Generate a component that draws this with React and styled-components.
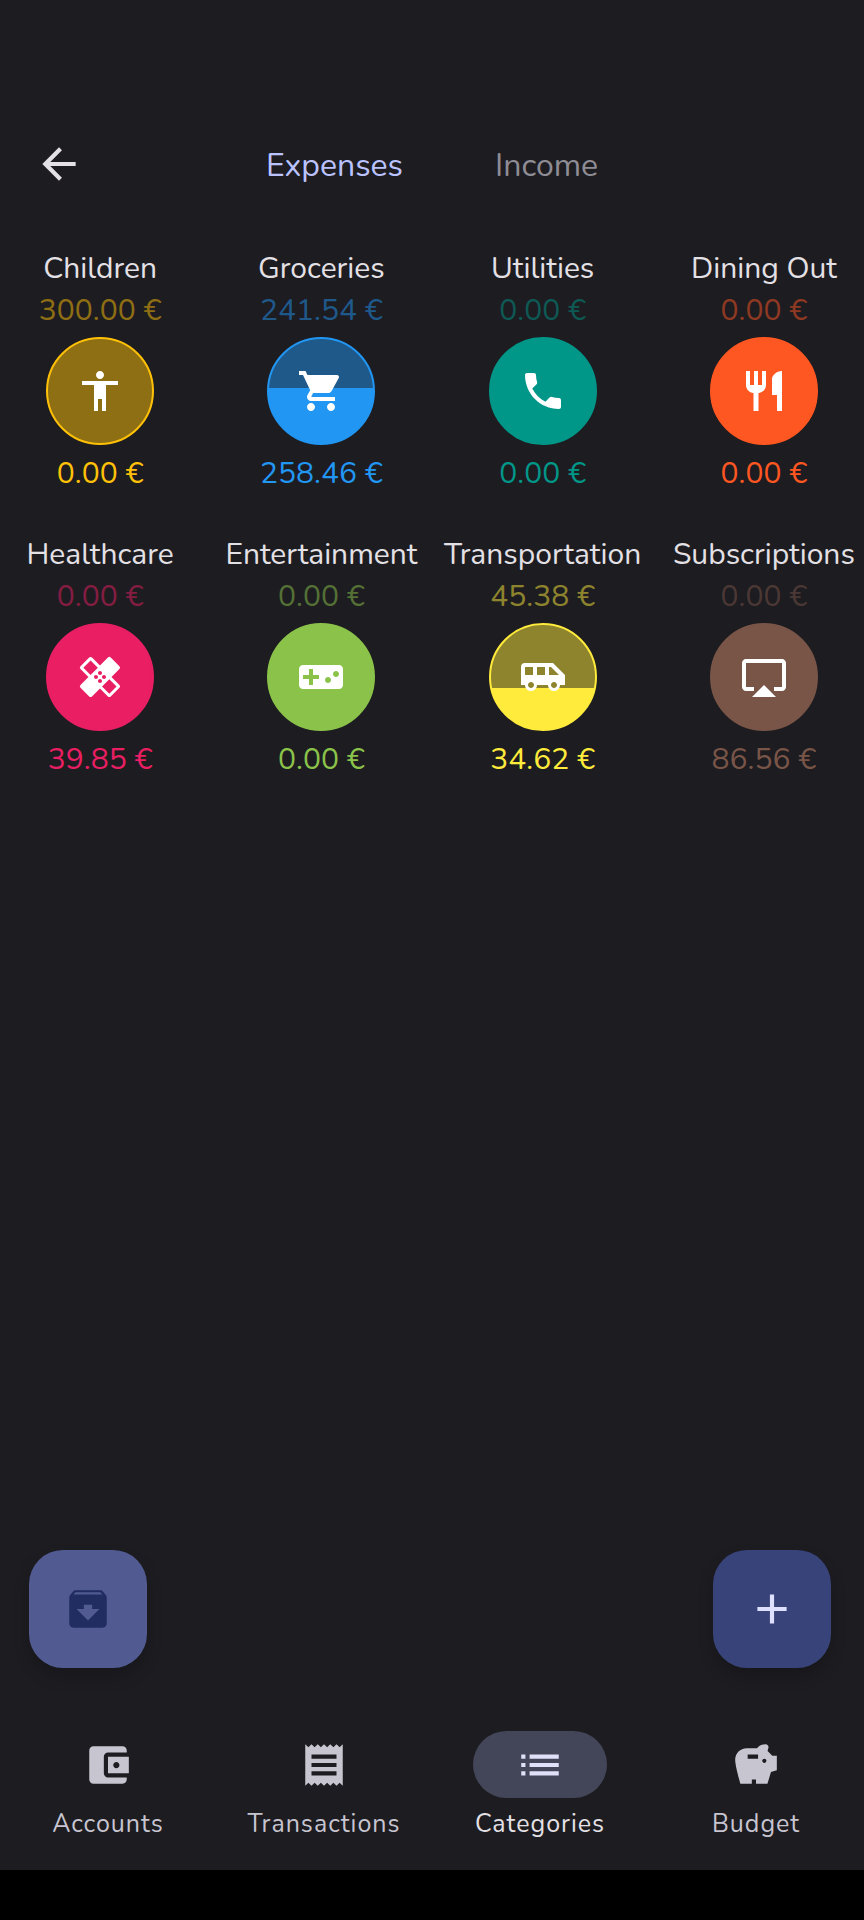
import React from "react";
import styled, { createGlobalStyle } from "styled-components";
import {
  MdAccessibility,
  MdAccountBalanceWallet,
  MdAdd,
  MdAirplay,
  MdAirportShuttle,
  MdArchive,
  MdArrowBack,
  MdHealing,
  MdList,
  MdPhone,
  MdReceipt,
  MdRestaurant,
  MdSavings,
  MdShoppingCart,
  MdVideogameAsset,
} from "react-icons/md";

const GlobalStyle = createGlobalStyle`
  *, *::before, *::after { box-sizing: border-box; }
  body {
    margin: 0;
    background: #000;
    color: #e4e1e6;
    font-family: Nunito, "Noto Sans", "Open Sans", sans-serif;
  }
  button {
    margin: 0;
    padding: 0;
    border: 0;
    background: none;
    color: inherit;
    font: inherit;
    cursor: pointer;
  }
  svg { display: block; }
`;

const Screen = styled.div`
  display: flex;
  flex-direction: column;
  min-height: 100vh;
  padding-bottom: 50px;
`;

const Content = styled.div`
  flex: 1;
  display: flex;
  flex-direction: column;
  padding-top: 114px;
  background: #1d1c21;
`;

const Header = styled.header`
  display: grid;
  grid-template-columns: 1fr auto 1fr;
  align-items: center;
  height: 100px;
  padding: 0 34px;
`;

const IconButton = styled.button`
  justify-self: start;
`;

const Tabs = styled.div`
  display: flex;
  gap: 92px;
`;

const Tab = styled.button`
  padding-top: 4px;
  font-size: 32px;
  line-height: 44px;
  color: ${(p) => (p.$active ? "#bac3ff" : "#8e8c94")};
`;

const CategoryGrid = styled.main`
  display: grid;
  grid-template-columns: repeat(4, minmax(0, 1fr));
  gap: 39px 21px;
  padding-top: 34px;
`;

const Category = styled.button`
  display: flex;
  flex-direction: column;
  align-items: center;
  font-size: 30px;
  line-height: 42px;
  white-space: nowrap;
  color: ${(p) => p.$color};
`;

const CategoryName = styled.span`
  color: #e4e1e6;
`;

const Remaining = styled.span`
  opacity: 0.5;
`;

const Disc = styled.span`
  display: grid;
  place-items: center;
  width: 108px;
  height: 108px;
  margin: 5px 0 8px;
  border: 2px solid ${(p) => p.$color};
  border-radius: 50%;
  background: linear-gradient(
      to top,
      ${(p) => p.$color} ${(p) => p.$level}%,
      ${(p) => p.$color}80 ${(p) => p.$level}%
    )
    border-box;
  color: #fff;
`;

const Actions = styled.div`
  display: flex;
  justify-content: space-between;
  margin-top: auto;
  padding: 40px 33px 63px 29px;
`;

const Fab = styled.button`
  display: grid;
  place-items: center;
  width: 118px;
  height: 118px;
  border-radius: 34px;
  background: ${(p) => (p.$primary ? "#384379" : "#515b92")};
  color: ${(p) => (p.$primary ? "#dee0ff" : "#212c61")};
  box-shadow: 0 8px 16px rgba(0, 0, 0, 0.2);
`;

const NavBar = styled.nav`
  display: grid;
  grid-template-columns: repeat(4, minmax(0, 1fr));
  padding-bottom: 28px;
`;

const NavItem = styled.button`
  display: flex;
  flex-direction: column;
  align-items: center;
  gap: 8px;
  font-size: 25px;
  line-height: 36px;
  letter-spacing: 1px;
  color: ${(p) => (p.$active ? "#e4e1e6" : "#c7c5d0")};
`;

const NavPill = styled.span`
  display: grid;
  place-items: center;
  width: 134px;
  height: 67px;
  border-radius: 34px;
  background: ${(p) => (p.$active ? "#434659" : "transparent")};
  color: ${(p) => (p.$active ? "#e0e1f9" : "#c7c5d0")};
`;

const categories = [
  { name: "Children", top: "300.00 €", bottom: "0.00 €", color: "#ffc107", level: 0, icon: MdAccessibility },
  { name: "Groceries", top: "241.54 €", bottom: "258.46 €", color: "#2196f3", level: 53, icon: MdShoppingCart },
  { name: "Utilities", top: "0.00 €", bottom: "0.00 €", color: "#009688", level: 100, icon: MdPhone },
  { name: "Dining Out", top: "0.00 €", bottom: "0.00 €", color: "#ff5722", level: 100, icon: MdRestaurant },
  { name: "Healthcare", top: "0.00 €", bottom: "39.85 €", color: "#e91e63", level: 100, icon: MdHealing },
  { name: "Entertainment", top: "0.00 €", bottom: "0.00 €", color: "#8bc34a", level: 100, icon: MdVideogameAsset },
  { name: "Transportation", top: "45.38 €", bottom: "34.62 €", color: "#ffeb3b", level: 40, icon: MdAirportShuttle },
  { name: "Subscriptions", top: "0.00 €", bottom: "86.56 €", color: "#795548", level: 100, icon: MdAirplay },
];

const navItems = [
  { label: "Accounts", icon: MdAccountBalanceWallet },
  { label: "Transactions", icon: MdReceipt },
  { label: "Categories", icon: MdList, active: true },
  { label: "Budget", icon: MdSavings },
];

export default function App() {
  return (
    <>
      <GlobalStyle />
      <Screen>
        <Content>
          <Header>
            <IconButton type="button" aria-label="Back">
              <MdArrowBack size={50} />
            </IconButton>
            <Tabs role="tablist">
              <Tab type="button" role="tab" aria-selected="true" $active>
                Expenses
              </Tab>
              <Tab type="button" role="tab" aria-selected="false">
                Income
              </Tab>
            </Tabs>
          </Header>
          <CategoryGrid>
            {categories.map(({ name, top, bottom, color, level, icon: Icon }) => (
              <Category key={name} type="button" $color={color}>
                <CategoryName>{name}</CategoryName>
                <Remaining>{top}</Remaining>
                <Disc $color={color} $level={level}>
                  <Icon size={48} />
                </Disc>
                <span>{bottom}</span>
              </Category>
            ))}
          </CategoryGrid>
          <Actions>
            <Fab type="button" aria-label="Archived categories">
              <MdArchive size={50} />
            </Fab>
            <Fab type="button" aria-label="Add category" $primary>
              <MdAdd size={50} />
            </Fab>
          </Actions>
          <NavBar>
            {navItems.map(({ label, icon: Icon, active }) => (
              <NavItem key={label} type="button" $active={active} aria-current={active ? "page" : undefined}>
                <NavPill $active={active}>
                  <Icon size={50} />
                </NavPill>
                <span>{label}</span>
              </NavItem>
            ))}
          </NavBar>
        </Content>
      </Screen>
    </>
  );
}
